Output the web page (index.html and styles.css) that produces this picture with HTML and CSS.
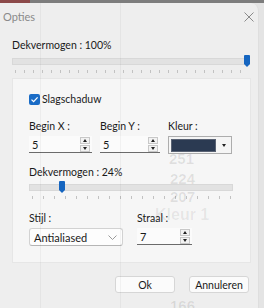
FILE: index.html
```html
<!DOCTYPE html>
<html>
<head>
<meta charset="utf-8">
<link rel="stylesheet" href="styles.css">
</head>
<body>
<div class="screen">
  <div class="topstrip"><span class="red"></span></div>
  <div class="dialog">
    <div class="ghost g251">251</div>
    <div class="ghost g224">224</div>
    <div class="ghost g207">207</div>
    <div class="ghost gkleur">Kleur 1</div>
    <div class="ghost g166">166</div>
    <div class="vline v1"></div>
    <div class="vline v2"></div>

    <div class="titlebar">
      <span class="title">Opties</span>
      <svg class="close" width="10" height="10" viewBox="0 0 10 10"><path d="M0.5 0.5L9.5 9.5M9.5 0.5L0.5 9.5" stroke="#8a8a8a" stroke-width="1"/></svg>
    </div>

    <div class="content">
      <div class="label top-label">Dekvermogen : 100%</div>
      <div class="slider wide">
        <div class="track"></div>
        <div class="thumb" style="left: 232px"></div>
        <div class="ticks"></div>
      </div>

      <div class="group">
        <label class="check">
          <span class="box"><svg width="9" height="9" viewBox="0 0 9 9"><path d="M1.5 4.6L3.6 6.6L7.6 2.4" fill="none" stroke="#fff" stroke-width="1.3"/></svg></span>
          <span>Slagschaduw</span>
        </label>

        <div class="row row1">
          <div class="field fx">
            <div class="label">Begin X :</div>
            <div class="spin"><span class="val">5</span><span class="arrows"><span class="up"></span><span class="dn"></span></span></div>
          </div>
          <div class="field fy">
            <div class="label">Begin Y :</div>
            <div class="spin"><span class="val">5</span><span class="arrows"><span class="up"></span><span class="dn"></span></span></div>
          </div>
          <div class="field fk">
            <div class="label">Kleur :</div>
            <div class="combo"><span class="swatch"></span><span class="caret"></span></div>
          </div>
        </div>

        <div class="label op-label">Dekvermogen : 24%</div>
        <div class="slider narrow">
          <div class="track"></div>
          <div class="thumb" style="left: 30px"></div>
          <div class="ticks"></div>
        </div>

        <div class="row row2">
          <div class="field fs">
            <div class="label">Stijl :</div>
            <div class="select"><span class="val">Antialiased</span>
              <svg class="chev" width="9" height="5" viewBox="0 0 9 5"><path d="M0.5 0.5L4.5 4.5L8.5 0.5" fill="none" stroke="#9a9a9a" stroke-width="1"/></svg>
            </div>
          </div>
          <div class="field fr">
            <div class="label">Straal :</div>
            <div class="spin"><span class="val">7</span><span class="arrows"><span class="up"></span><span class="dn"></span></span></div>
          </div>
        </div>
      </div>

      <div class="buttons">
        <button class="btn">Ok</button>
        <button class="btn">Annuleren</button>
      </div>
    </div>
  </div>
</div>
</body>
</html>
```

FILE: styles.css
```css
html, body {
  margin: 0;
  padding: 0;
  background: #e9e9e9;
}
body {
  width: 264px;
  height: 308px;
  overflow: hidden;
  font-family: "Lato", "Noto Sans", sans-serif;
  font-size: 10.5px;
  color: #1a1a1a;
}
.screen {
  width: 264px;
  height: 308px;
  display: flex;
  flex-direction: column;
  background: #e4e4e4;
}
.topstrip {
  height: 3px;
  background: #7d7d7d;
  display: flex;
}
.topstrip .red {
  width: 30px;
  background: #8c4a4a;
}
.dialog {
  position: relative;
  flex: 1;
  margin-right: 5px;
  background: #eeeeee;
  border-top-right-radius: 8px;
  border-right: 1px solid #dedede;
}
.ghost {
  position: absolute;
  color: rgba(0, 0, 0, 0.09);
  font-family: "Liberation Sans", sans-serif;
  font-weight: bold;
  font-size: 15px;
  line-height: 1;
  z-index: 2;
  pointer-events: none;
}
.g251 { left: 169px; top: 148px; }
.g224 { left: 170px; top: 168px; }
.g207 { left: 170px; top: 186px; }
.gkleur { left: 155px; top: 204px; font-size: 16px; color: rgba(0, 0, 0, 0.07); }
.g166 { left: 170px; top: 295px; }
.vline {
  position: absolute;
  top: 0;
  bottom: 0;
  width: 1px;
  background: rgba(0, 0, 0, 0.04);
  z-index: 2;
}
.v1 { left: 40px; }
.v2 { left: 120px; }

.titlebar {
  position: relative;
  height: 27px;
  display: flex;
  align-items: center;
  justify-content: space-between;
  padding: 0 4px 0 3px;
}
.title {
  color: #8a8a8a;
  font-size: 11px;
}

.content {
  position: relative;
  padding: 0 9px 0 12px;
}
.label {
  font-size: 10.5px;
  line-height: 14px;
  color: #1a1a1a;
}
.top-label {
  margin-top: 8px;
}
.slider {
  position: relative;
  height: 22px;
}
.slider .track {
  position: absolute;
  left: 0;
  right: 0;
  top: 6px;
  height: 5px;
  background: #e2e2e2;
  border: 1px solid #d8d8d8;
}
.slider .thumb {
  position: absolute;
  top: 3px;
  width: 6px;
  height: 9px;
  background: #1565c0;
  border-radius: 1px 1px 0 0;
}
.slider .thumb::after {
  content: "";
  position: absolute;
  left: 0;
  top: 9px;
  border-left: 3px solid transparent;
  border-right: 3px solid transparent;
  border-top: 3px solid #1565c0;
}
.slider .ticks {
  position: absolute;
  left: 3px;
  right: 2px;
  top: 18px;
  height: 3px;
  background: repeating-linear-gradient(to right, #c2c2c2 0 1px, transparent 1px 9px);
}
.slider.narrow .ticks {
  background: repeating-linear-gradient(to right, #c2c2c2 0 1px, transparent 1px 11px);
}
.slider.wide { width: 238px; }

.group {
  position: relative;
  margin-top: 4px;
  width: 221px;
  height: 170px;
  padding: 13px 0 0 16px;
  background: #f6f6f6;
  border: 1px solid #e6e6e6;
}
.check {
  display: flex;
  align-items: center;
  gap: 2px;
  height: 14px;
}
.check .box {
  width: 11px;
  height: 11px;
  border-radius: 2px;
  background: #1a6cc6;
  display: flex;
  align-items: center;
  justify-content: center;
}
.row {
  display: flex;
}
.row1 {
  margin-top: 13px;
  gap: 8px;
}
.field .label {
  margin-bottom: 3px;
}
.spin {
  position: relative;
  height: 17px;
  background: #fbfbfb;
  border-bottom: 1px solid #6b6b6b;
  display: flex;
  align-items: center;
  justify-content: space-between;
  padding: 0 2px 0 3px;
  box-sizing: border-box;
  font-size: 11px;
}
.fx .spin { width: 63px; }
.fy .spin { width: 60px; }
.fr .spin { width: 55px; }
.arrows {
  display: flex;
  flex-direction: column;
  gap: 1px;
}
.arrows span {
  width: 10px;
  height: 7px;
  background: #f2f2f2;
  border: 1px solid #c8c8c8;
  box-sizing: border-box;
  display: flex;
  align-items: center;
  justify-content: center;
}
.arrows .up::after {
  content: "";
  border-left: 2px solid transparent;
  border-right: 2px solid transparent;
  border-bottom: 3px solid #222;
}
.arrows .dn::after {
  content: "";
  border-left: 2px solid transparent;
  border-right: 2px solid transparent;
  border-top: 3px solid #222;
}
.combo {
  width: 64px;
  height: 18px;
  box-sizing: border-box;
  border: 1px solid #adadad;
  background: #f5f5f5;
  display: flex;
  align-items: center;
  padding: 0 2px;
}
.swatch {
  width: 45px;
  height: 13px;
  background: #2b3a52;
  border: 1px solid #596273;
  box-sizing: border-box;
}
.caret {
  margin-left: 6px;
  border-left: 2px solid transparent;
  border-right: 2px solid transparent;
  border-top: 3px solid #222;
}
.op-label {
  margin-top: 11px;
}
.slider.narrow {
  width: 204px;
  margin-top: -1px;
}
.row2 {
  margin-top: 11px;
  gap: 14px;
}
.select {
  width: 94px;
  height: 18px;
  box-sizing: border-box;
  border: 1px solid #d2d2d2;
  border-bottom-color: #b5b5b5;
  background: #fdfdfd;
  border-radius: 3px;
  display: flex;
  align-items: center;
  justify-content: space-between;
  padding: 0 5px 0 4px;
  font-size: 11px;
}
.buttons {
  display: flex;
  justify-content: flex-end;
  gap: 14px;
  margin-top: 13px;
}
.btn {
  width: 60px;
  height: 17px;
  font-family: "Lato", "Noto Sans", sans-serif;
  font-size: 10.5px;
  color: #1a1a1a;
  background: #fbfbfb;
  border: 1px solid #d6d6d6;
  border-radius: 3px;
  padding: 0;
  line-height: 14px;
}
```
